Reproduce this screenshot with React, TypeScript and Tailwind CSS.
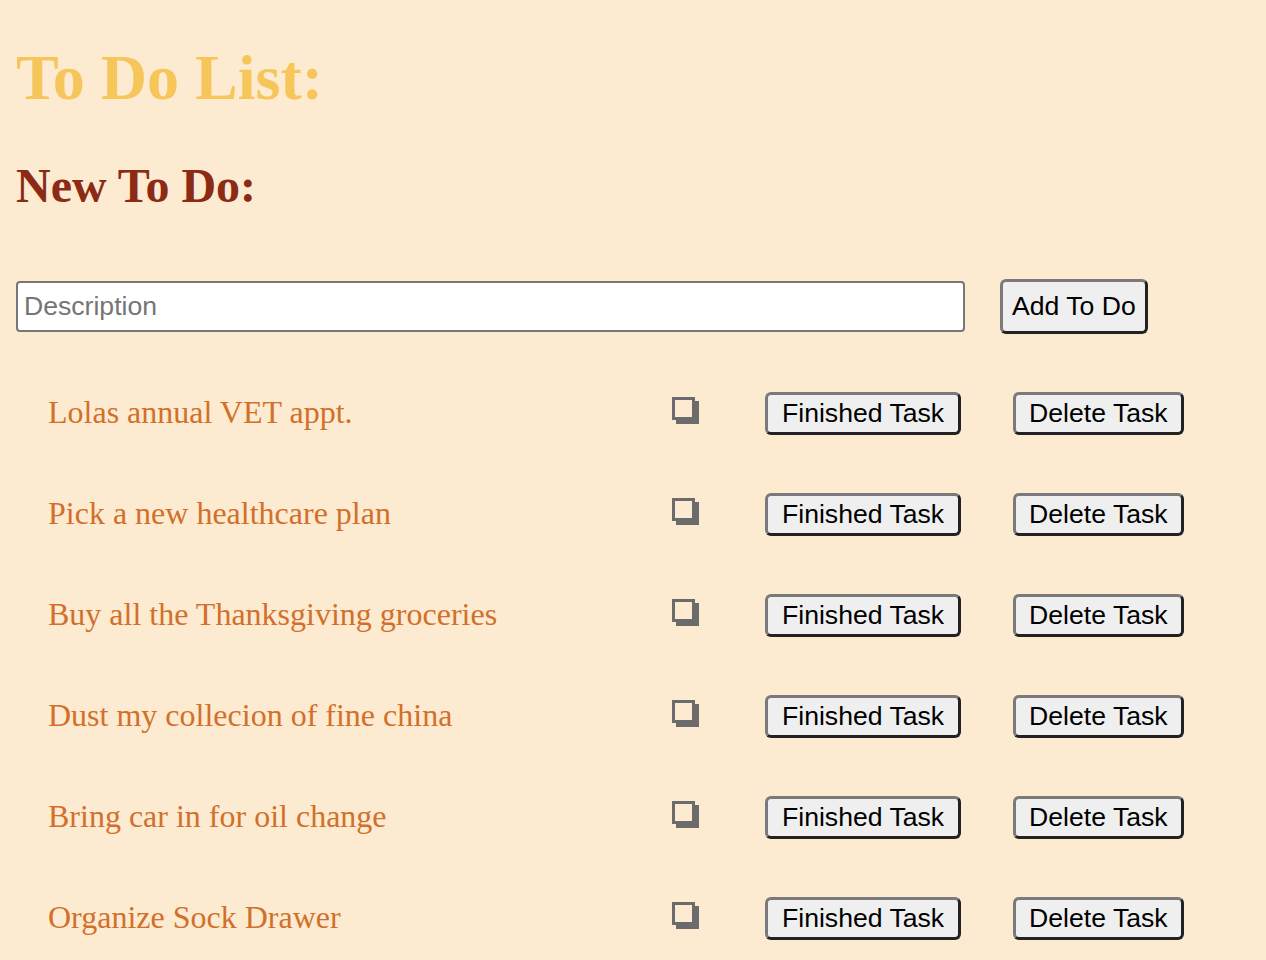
const todos = [
  "Lolas annual VET appt.",
  "Pick a new healthcare plan",
  "Buy all the Thanksgiving groceries",
  "Dust my collecion of fine china",
  "Bring car in for oil change",
  "Organize Sock Drawer",
];

const btn =
  "rounded-[6px] border-[3px] border-t-[#7a7a7a] border-l-[#7a7a7a] border-b-[#222] border-r-[#222] bg-[#efefef] text-[26.6px] leading-none text-black [font-family:'Liberation_Sans',Arial,sans-serif]";

function TodoRow({ text }: { text: string }) {
  return (
    <li className="flex h-[101px] items-center">
      <span className="mb-[4px] w-[656px] pl-[32px] text-[32px] leading-none text-[#d2702b]">
        {text}
      </span>
      <span className="mb-[10px] h-[23px] w-[23px] border-[3px] border-[#6b6b6b] bg-[#fcebd0] shadow-[4px_4px_0_#6b6b6b]" />
      <button type="button" className={`${btn} ml-[70px] h-[43px] px-[14px]`}>
        Finished Task
      </button>
      <button type="button" className={`${btn} ml-[52px] h-[43px] px-[13px]`}>
        Delete Task
      </button>
    </li>
  );
}

export default function App() {
  return (
    <div className="min-h-[960px] bg-[#fcebd0] px-4 [font-family:'Liberation_Serif','Times_New_Roman',serif]">
      <h1 className="pt-[46px] text-[64px] font-bold leading-none text-[#f7c65a]">
        To Do List:
      </h1>
      <h2 className="mt-[52px] text-[48px] font-bold leading-none text-[#8b2b15]">
        New To Do:
      </h2>

      <div className="mt-[69px] flex items-center">
        <input
          type="text"
          placeholder="Description"
          className="h-[51px] w-[949px] rounded-[4px] border-2 border-[#777] bg-white px-[6px] text-[26.6px] outline-none placeholder:text-[#757575] [font-family:'Liberation_Sans',Arial,sans-serif]"
        />
        <button type="button" className={`${btn} ml-[35px] h-[55px] px-[9px]`}>
          Add To Do
        </button>
      </div>

      <ul className="mt-[29px]">
        {todos.map((todo) => (
          <TodoRow key={todo} text={todo} />
        ))}
      </ul>
    </div>
  );
}
